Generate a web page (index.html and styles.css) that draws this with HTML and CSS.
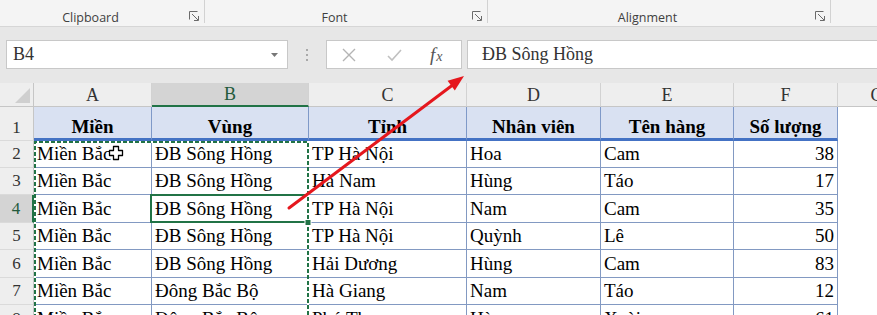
FILE: index.html
```html
<!DOCTYPE html>
<html lang="vi">
<head>
<meta charset="utf-8">
<title>Excel</title>
<link rel="stylesheet" href="styles.css">
</head>
<body>
<div class="app">
  <div class="ribbon">
    <div class="group g1">
      <span class="glabel">Clipboard</span>
      <span class="launch"><svg width="10" height="10" viewBox="0 0 10 10"><path d="M0.5 8.5V0.5H8.5" fill="none" stroke="#6a6a6a"/><path d="M3 3L9 9M5 9.5H9.5V5" fill="none" stroke="#6a6a6a"/></svg></span>
    </div>
    <div class="group g2">
      <span class="glabel">Font</span>
      <span class="launch"><svg width="10" height="10" viewBox="0 0 10 10"><path d="M0.5 8.5V0.5H8.5" fill="none" stroke="#6a6a6a"/><path d="M3 3L9 9M5 9.5H9.5V5" fill="none" stroke="#6a6a6a"/></svg></span>
    </div>
    <div class="group g3">
      <span class="glabel">Alignment</span>
      <span class="launch"><svg width="10" height="10" viewBox="0 0 10 10"><path d="M0.5 8.5V0.5H8.5" fill="none" stroke="#6a6a6a"/><path d="M3 3L9 9M5 9.5H9.5V5" fill="none" stroke="#6a6a6a"/></svg></span>
    </div>
    <div class="group g4"></div>
  </div>

  <div class="fbar">
    <div class="namebox">
      <span class="nb-text">B4</span>
      <svg class="nb-arrow" width="7" height="4" viewBox="0 0 7 4"><path d="M0 0H7L3.5 4Z" fill="#777"/></svg>
    </div>
    <div class="grip"><i></i><i></i><i></i></div>
    <div class="fbtns">
      <svg class="ic-x" width="14" height="14" viewBox="0 0 14 14"><path d="M1 1L13 13M13 1L1 13" stroke="#b4b4b4" stroke-width="1.4" fill="none"/></svg>
      <svg class="ic-ok" width="15" height="14" viewBox="0 0 15 14"><path d="M1 8L5 12L14 2" stroke="#c0c0c0" stroke-width="1.6" fill="none"/></svg>
      <span class="fx"><span class="fx-f">f</span><span class="fx-x">x</span></span>
    </div>
    <div class="finput">ĐB Sông Hồng</div>
  </div>

  <div class="sheet">
    <div class="corner"><svg width="33" height="23" viewBox="0 0 33 23"><path d="M30 5V20H15Z" fill="#cfcfcf"/></svg></div>
    <div class="ch">A</div>
    <div class="ch on">B</div>
    <div class="ch">C</div>
    <div class="ch">D</div>
    <div class="ch">E</div>
    <div class="ch">F</div>
    <div class="ch last">G</div>

    <div class="rh top">1</div>
    <div class="hd">Miền</div>
    <div class="hd">Vùng</div>
    <div class="hd">Tỉnh</div>
    <div class="hd">Nhân viên</div>
    <div class="hd">Tên hàng</div>
    <div class="hd">Số lượng</div>
    <div class="blank"></div>

    <div class="rh">2</div>
    <div class="d">Miền Bắc</div>
    <div class="d">ĐB Sông Hồng</div>
    <div class="d">TP Hà Nội</div>
    <div class="d">Hoa</div>
    <div class="d">Cam</div>
    <div class="d n">38</div>
    <div class="blank"></div>

    <div class="rh">3</div>
    <div class="d">Miền Bắc</div>
    <div class="d">ĐB Sông Hồng</div>
    <div class="d">Hà Nam</div>
    <div class="d">Hùng</div>
    <div class="d">Táo</div>
    <div class="d n">17</div>
    <div class="blank"></div>

    <div class="rh on">4</div>
    <div class="d">Miền Bắc</div>
    <div class="d">ĐB Sông Hồng</div>
    <div class="d">TP Hà Nội</div>
    <div class="d">Nam</div>
    <div class="d">Cam</div>
    <div class="d n">35</div>
    <div class="blank"></div>

    <div class="rh">5</div>
    <div class="d">Miền Bắc</div>
    <div class="d">ĐB Sông Hồng</div>
    <div class="d">TP Hà Nội</div>
    <div class="d">Quỳnh</div>
    <div class="d">Lê</div>
    <div class="d n">50</div>
    <div class="blank"></div>

    <div class="rh">6</div>
    <div class="d">Miền Bắc</div>
    <div class="d">ĐB Sông Hồng</div>
    <div class="d">Hải Dương</div>
    <div class="d">Hùng</div>
    <div class="d">Cam</div>
    <div class="d n">83</div>
    <div class="blank"></div>

    <div class="rh">7</div>
    <div class="d">Miền Bắc</div>
    <div class="d">Đông Bắc Bộ</div>
    <div class="d">Hà Giang</div>
    <div class="d">Nam</div>
    <div class="d">Táo</div>
    <div class="d n">12</div>
    <div class="blank"></div>

    <div class="rh">8</div>
    <div class="d">Miền Bắc</div>
    <div class="d">Đông Bắc Bộ</div>
    <div class="d">Phú Thọ</div>
    <div class="d">Hùng</div>
    <div class="d">Xoài</div>
    <div class="d n">61</div>
    <div class="blank"></div>
  </div>

  <svg class="overlay" width="877" height="315" viewBox="0 0 877 315">
    <rect x="151" y="195" width="157" height="27" fill="none" stroke="#217346" stroke-width="2"/>
    <path d="M35 330V142H308V330" fill="none" stroke="#ffffff" stroke-width="2"/>
    <path d="M35 330V142H308V330" fill="none" stroke="#217346" stroke-width="2" stroke-dasharray="4 2"/>
    <rect x="305" y="219.5" width="6" height="6" fill="#217346" stroke="#ffffff" stroke-width="1"/>
    <path d="M113.5 146.5h5v4h4v5h-4v4h-5v-4h-4v-5h4z" fill="#ffffff" stroke="#000000" stroke-width="1.3" stroke-linejoin="round"/>
    <line x1="289" y1="208" x2="452" y2="85.5" stroke="#e5171d" stroke-width="3" stroke-linecap="round"/>
    <polygon points="464,76 454.8,90.4 447.6,80.8" fill="#e5171d"/>
  </svg>
</div>
</body>
</html>
```

FILE: styles.css
```css
html, body {
  margin: 0;
  padding: 0;
}
body {
  background: #e7e7e7;
}
.app {
  position: relative;
  width: 877px;
  height: 315px;
  overflow: hidden;
  background: #e7e7e7;
}

/* ribbon */
.ribbon {
  display: flex;
  align-items: flex-start;
  height: 27px;
  box-sizing: border-box;
  background: #f4f4f4;
  border-bottom: 1px solid #d6d6d6;
  box-shadow: 0 1px 2px rgba(0, 0, 0, 0.06);
}
.group {
  display: flex;
  align-items: flex-end;
  height: 23px;
  box-sizing: border-box;
  border-right: 1px solid #d2d2d2;
}
.g1 { width: 205px; }
.g2 { width: 283px; }
.g3 { width: 343px; }
.g4 { flex: 1; border-right: none; }
.glabel {
  flex: 1;
  text-align: center;
  font-family: "Open Sans", "Noto Sans", sans-serif;
  font-size: 12.5px;
  line-height: 15px;
  color: #3f3f3f;
  margin-bottom: -2px;
}
.launch {
  display: flex;
  width: 10px;
  height: 10px;
  margin: 0 5px 2px 8px;
}
.launch svg { display: block; }

/* formula bar */
.fbar {
  display: flex;
  align-items: flex-start;
  height: 56px;
  box-sizing: border-box;
  padding-top: 13px;
  background: #e7e7e7;
}
.namebox {
  display: flex;
  align-items: center;
  margin-left: 6px;
  width: 282px;
  height: 29px;
  box-sizing: border-box;
  background: #ffffff;
  border: 1px solid #c8c8c8;
  padding-left: 6px;
}
.nb-text {
  font-family: "Liberation Serif", "Times New Roman", serif;
  font-size: 18px;
  color: #333333;
}
.nb-arrow {
  margin-left: auto;
  margin-right: 9px;
  margin-top: 1px;
}
.grip {
  display: flex;
  flex-direction: column;
  align-items: center;
  justify-content: center;
  gap: 3px;
  width: 38px;
  height: 29px;
}
.grip i {
  display: block;
  width: 2px;
  height: 2px;
  background: #a9a9a9;
}
.fbtns {
  display: flex;
  align-items: center;
  width: 136px;
  height: 29px;
  box-sizing: border-box;
  background: #ffffff;
  border: 1px solid #c8c8c8;
}
.ic-x { margin-left: 15px; }
.ic-ok { margin-left: 31px; }
.fx {
  margin-left: 28px;
  font-family: "Liberation Serif", "Times New Roman", serif;
  font-style: italic;
  color: #555555;
  line-height: 1;
}
.fx-f { font-size: 19px; }
.fx-x { font-size: 14px; margin-left: 1px; }
.finput {
  flex: 1;
  margin-left: 5px;
  margin-right: -2px;
  height: 29px;
  box-sizing: border-box;
  background: #ffffff;
  border: 1px solid #c8c8c8;
  padding-left: 14px;
  display: flex;
  align-items: center;
  font-family: "Liberation Serif", "Times New Roman", serif;
  font-size: 18px;
  color: #333333;
}

/* sheet */
.sheet {
  display: grid;
  grid-template-columns: 34px 118px 157px 158px 134px 133px 104px 78px;
  grid-template-rows: 24px 34px 27px 27px 28px 27px 28px 27px 28px;
  background: #ffffff;
  font-family: "Liberation Serif", "Times New Roman", serif;
  color: #000000;
}
.sheet > div {
  box-sizing: border-box;
  display: flex;
  align-items: flex-end;
  white-space: nowrap;
  overflow: hidden;
  line-height: 1.1;
}
.corner {
  background: #eeeeee;
  border-right: 1px solid #c6c6c6;
  border-bottom: 1px solid #c6c6c6;
}
.corner svg { display: block; }
.ch {
  background: #eeeeee;
  border-right: 1px solid #d2d2d2;
  border-bottom: 1px solid #c6c6c6;
  justify-content: center;
  font-size: 18px;
  color: #333333;
}
.ch.on {
  background: #d4d4d4;
  border-bottom: 2px solid #217346;
  color: #235a3c;
}
.ch.last { border-right: none; }
.rh {
  background: #eeeeee;
  border-right: 1px solid #c6c6c6;
  border-bottom: 1px solid #dadada;
  justify-content: center;
  font-size: 17px;
  color: #333333;
  padding-bottom: 3px;
}
.rh.top { padding-bottom: 2px; }
.rh.on {
  background: #d4d4d4;
  border-right: 2px solid #217346;
  color: #235a3c;
}
.hd {
  background: #d9e1f2;
  border-right: 1px solid #7f99c8;
  border-bottom: 3px solid #4472c4;
  justify-content: center;
  font-weight: bold;
  font-size: 19px;
}
.d {
  background: #ffffff;
  border-right: 1px solid #8299c2;
  border-bottom: 1px solid #8299c2;
  padding: 0 3px 2px 3px;
  font-size: 19px;
}
.d.n { justify-content: flex-end; }
.blank { background: #ffffff; }

.overlay {
  position: absolute;
  left: 0;
  top: 0;
  pointer-events: none;
}
```
